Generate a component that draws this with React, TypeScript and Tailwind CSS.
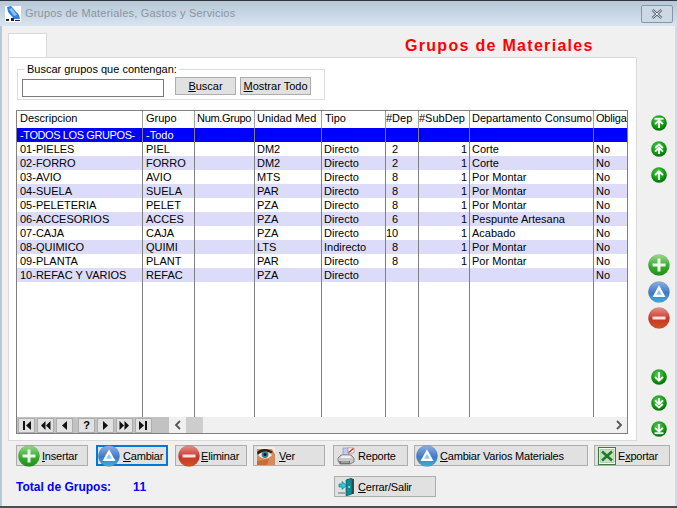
import type { ReactNode } from "react";

const rows = [
  ["01-PIELES", "PIEL", "", "DM2", "Directo", "2", "1", "Corte", "No"],
  ["02-FORRO", "FORRO", "", "DM2", "Directo", "2", "1", "Corte", "No"],
  ["03-AVIO", "AVIO", "", "MTS", "Directo", "8", "1", "Por Montar", "No"],
  ["04-SUELA", "SUELA", "", "PAR", "Directo", "8", "1", "Por Montar", "No"],
  ["05-PELETERIA", "PELET", "", "PZA", "Directo", "8", "1", "Por Montar", "No"],
  ["06-ACCESORIOS", "ACCES", "", "PZA", "Directo", "6", "1", "Pespunte Artesana", "No"],
  ["07-CAJA", "CAJA", "", "PZA", "Directo", "10", "1", "Acabado", "No"],
  ["08-QUIMICO", "QUIMI", "", "LTS", "Indirecto", "8", "1", "Por Montar", "No"],
  ["09-PLANTA", "PLANT", "", "PAR", "Directo", "8", "1", "Por Montar", "No"],
  ["10-REFAC Y VARIOS", "REFAC", "", "PZA", "Directo", "", "", "", "No"],
];

const header = ["Descripcion", "Grupo", "Num.Grupo", "Unidad Med", "Tipo", "#Dep", "#SubDep", "Departamento Consumo", "Obliga"];

function Cells({ values, firstTight = false }: { values: string[]; firstTight?: boolean }) {
  return (
    <>
      <div className={`w-[126px] border-r border-[#808080] pl-[3px] whitespace-nowrap overflow-hidden ${firstTight ? "tracking-[-0.4px]" : ""}`}>{values[0]}</div>
      <div className="w-[52px] border-r border-[#808080] pl-[3px] whitespace-nowrap overflow-hidden">{values[1]}</div>
      <div className="w-[60px] border-r border-[#808080] pl-[2px] whitespace-nowrap overflow-hidden">{values[2]}</div>
      <div className="w-[67px] border-r border-[#808080] pl-[2px] whitespace-nowrap overflow-hidden">{values[3]}</div>
      <div className="w-[64px] border-r border-[#808080] pl-[2px] whitespace-nowrap overflow-hidden">{values[4]}</div>
      <div className="w-[33px] border-r border-[#808080] text-right pr-[20px] whitespace-nowrap">{values[5]}</div>
      <div className="w-[51px] border-r border-[#808080] text-right pr-[2px] whitespace-nowrap">{values[6]}</div>
      <div className="w-[124px] border-r border-[#808080] pl-[2px] whitespace-nowrap overflow-hidden">{values[7]}</div>
      <div className="flex-1 pl-[2px] whitespace-nowrap overflow-hidden">{values[8]}</div>
    </>
  );
}

function HeaderCells() {
  return (
    <>
      <div className="w-[126px] border-r border-[#a0a0a0] pl-[3px] whitespace-nowrap">{header[0]}</div>
      <div className="w-[52px] border-r border-[#a0a0a0] pl-[3px] whitespace-nowrap">{header[1]}</div>
      <div className="w-[60px] border-r border-[#a0a0a0] pl-[2px] tracking-[-0.3px] whitespace-nowrap">{header[2]}</div>
      <div className="w-[67px] border-r border-[#a0a0a0] pl-[2px] whitespace-nowrap">{header[3]}</div>
      <div className="w-[64px] border-r border-[#a0a0a0] pl-[3px] whitespace-nowrap">{header[4]}</div>
      <div className="w-[33px] border-r border-[#a0a0a0] whitespace-nowrap">{header[5]}</div>
      <div className="w-[51px] border-r border-[#a0a0a0] whitespace-nowrap">{header[6]}</div>
      <div className="w-[124px] border-r border-[#a0a0a0] pl-[2px] whitespace-nowrap overflow-hidden">{header[7]}</div>
      <div className="flex-1 pl-[2px] tracking-[-0.2px] whitespace-nowrap">{header[8]}</div>
    </>
  );
}

// round green arrow icons on the right side
function ArrowIcon({ kind, down = false }: { kind: "end" | "page" | "one"; down?: boolean }) {
  return (
    <svg width="16" height="16" viewBox="0 0 16 16" className="block shrink-0">
      <defs>
        <radialGradient id="greenBall" cx="0.45" cy="0.35" r="0.7">
          <stop offset="0" stopColor="#5ed05e" />
          <stop offset="0.6" stopColor="#129a12" />
          <stop offset="1" stopColor="#046004" />
        </radialGradient>
      </defs>
      <circle cx="8" cy="8" r="7.8" fill="url(#greenBall)" />
      <g fill="none" stroke="#fff" strokeWidth="1.8" transform={down ? "rotate(180 8 8)" : undefined}>
        {kind === "end" && (
          <>
            <path d="M3.5 3.8H12.5" />
            <path d="M4 9.2L8 5.4L12 9.2" />
            <path d="M8 6V13" />
          </>
        )}
        {kind === "page" && (
          <>
            <path d="M4.2 7L8 3.4L11.8 7" />
            <path d="M4 10.6L8 6.8L12 10.6" />
            <path d="M8 7V13" />
          </>
        )}
        {kind === "one" && (
          <>
            <path d="M4 8.2L8 4.2L12 8.2" />
            <path d="M8 5V13" />
          </>
        )}
      </g>
    </svg>
  );
}

function BallIcon({ kind }: { kind: "plus" | "delta" | "minus" }) {
  const id = kind === "plus" ? "ballPlus" : kind === "delta" ? "ballDelta" : "ballMinus";
  const stops =
    kind === "plus"
      ? ["#9ad88e", "#35ad2c", "#1f8f1a"]
      : kind === "delta"
        ? ["#8fb0e4", "#3f78c8", "#3fb0d8"]
        : ["#e89088", "#c8352c", "#d0561c"];
  return (
    <svg width="22" height="22" viewBox="0 0 22 22" className="block shrink-0">
      <defs>
        <linearGradient id={id} x1="0" y1="0" x2="0" y2="1">
          <stop offset="0" stopColor={stops[0]} />
          <stop offset="0.55" stopColor={stops[1]} />
          <stop offset="1" stopColor={stops[2]} />
        </linearGradient>
      </defs>
      <circle cx="11" cy="11" r="10.6" fill={`url(#${id})`} stroke="#00000030" strokeWidth="0.6" />
      {kind === "plus" && <path d="M11 4.500V17.500M4.500 11H17.500" stroke="#eef8ea" strokeWidth="3" />}
      {kind === "minus" && <path d="M4.500 11H17.500" stroke="#f6e4e0" strokeWidth="3" />}
      {kind === "delta" && <path d="M11 6.500L15.600 14.800H6.400Z" fill="#8fc8f0" stroke="#fff" strokeWidth="2.2" />}
    </svg>
  );
}

function EyeIcon() {
  return (
    <svg width="18" height="18" viewBox="0 0 18 18" className="block shrink-0">
      <rect width="18" height="18" fill="#f6efe8" />
      <path d="M0 2H15L18 7V18H4L0 14Z" fill="#d98a58" />
      <path d="M0 5C4 1 11 1 16 5L14 6C10 4 5 4 1 8Z" fill="#2c2018" />
      <path d="M1 8C5 4 11 4 15 8C12 12 5 13 1 8Z" fill="#f2ece6" />
      <circle cx="8" cy="7.600" r="3.400" fill="#3a8098" />
      <circle cx="8" cy="7.600" r="1.500" fill="#101820" />
      <path d="M0 14L6 13L12 12L10 18H0Z" fill="#c86c3c" />
    </svg>
  );
}

function PrinterIcon() {
  return (
    <svg width="18" height="18" viewBox="0 0 18 18" className="block shrink-0">
      <path d="M6 1H12V8H6Z" fill="#c8c8f0" stroke="#8888c8" strokeWidth="0.6" />
      <path d="M11 1H17V6H11Z" fill="#fff" stroke="#808080" strokeWidth="0.6" />
      <path d="M11.500 5.500L16.500 1.500" stroke="#e02020" strokeWidth="1.400" />
      <path d="M4 8H14L17 11V15L13 17H3L1 14V11Z" fill="#c8c8c8" stroke="#606060" strokeWidth="0.7" />
      <path d="M5 8.500H13L14.500 11H3.500Z" fill="#f0f0f0" />
      <path d="M2 14H13V17H3Z" fill="#707070" />
      <path d="M4 15H12" stroke="#e8e8e8" strokeWidth="0.8" />
    </svg>
  );
}

function ExcelIcon() {
  return (
    <svg width="18" height="18" viewBox="0 0 18 18" className="block shrink-0">
      <rect x="0.5" y="0.5" width="17" height="17" fill="#f4f8f0" stroke="#3c7c3c" />
      <rect x="2" y="2.500" width="14" height="13" fill="#c8dfc0" stroke="#8cb48c" strokeWidth="0.5" />
      <path d="M4 4.500L14 13.500M14 4.500L4 13.500" stroke="#1f7a2c" strokeWidth="2.600" />
    </svg>
  );
}

function DoorIcon() {
  return (
    <svg width="17" height="18" viewBox="0 0 17 18" className="block shrink-0">
      <rect x="9" y="1" width="7" height="15" fill="#404848" />
      <path d="M8 2L14 0V16L8 18Z" fill="#0e8c94" stroke="#084c50" strokeWidth="0.6" />
      <rect x="10.500" y="8" width="1.200" height="2" fill="#d8f0f0" />
      <path d="M1 6H4V3.500L8.500 7.500L4 11.500V9H1Z" fill="#30c8d8" stroke="#186870" strokeWidth="0.6" />
      <rect x="0" y="14" width="8" height="2" fill="#a0a8a8" />
    </svg>
  );
}

function Btn({ w, focus = false, children }: { w: string; focus?: boolean; children: ReactNode }) {
  return (
    <div
      className={`${w} h-[21px] shrink-0 flex items-center bg-[#e1e1e1] ${focus ? "border-2 border-[#0078d7]" : "border border-[#adadad]"} leading-[14px] tracking-[-0.2px] whitespace-nowrap`}
    >
      {children}
    </div>
  );
}

function NavBtn({ children }: { children: ReactNode }) {
  return (
    <div className="w-[17px] h-[15px] shrink-0 flex items-center justify-center bg-[#e1e1e1] border border-[#adadad]">
      {children}
    </div>
  );
}

function NavGlyph({ d }: { d: string }) {
  return (
    <svg width="11" height="9" viewBox="0 0 11 9" className="block">
      <path d={d} fill="#111" />
    </svg>
  );
}

export default function App() {
  return (
    <div
      className="w-[677px] h-[508px] flex flex-col overflow-hidden bg-[#f0f0f0] text-[11px] text-black border-t border-[#30363c] border-b-2 border-b-[#46505a]"
      style={{ fontFamily: '"Liberation Sans", Arial, sans-serif' }}
    >
      {/* Title bar */}
      <div className="h-[25px] shrink-0 flex items-center bg-gradient-to-b from-[#b7c8d8] to-[#d8e4f0] pl-[5px] pr-[4px]">
        <svg width="16" height="16" viewBox="0 0 16 16" className="block shrink-0">
          <rect width="16" height="16" fill="#fff" />
          <path d="M2 1L6 0L14 9L15 13L9 13L3 6Z" fill="#2f7fe0" />
          <path d="M4 3L7 2L12 9L9 10Z" fill="#8cc0f4" />
          <path d="M1 13H4V15H1ZM6 12H9V15H6ZM10 14H15V15H10Z" fill="#1c2430" />
        </svg>
        <div className="ml-[4px] text-[#8a949e] tracking-[0.2px] whitespace-nowrap">Grupos de Materiales, Gastos y Servicios</div>
        <div className="ml-auto w-[32px] h-[18px] flex items-center justify-center rounded-[2px] border border-[#8496aa] bg-[#ccd8e4]">
          <svg width="12" height="10" viewBox="0 0 12 10" className="block">
            <path d="M1.500 1L10.500 9M10.500 1L1.500 9" stroke="#5a6470" strokeWidth="2.600" />
            <path d="M1.500 1L10.500 9M10.500 1L1.500 9" stroke="#f0f4f8" strokeWidth="1" />
          </svg>
        </div>
      </div>

      {/* Body */}
      <div className="flex-1 flex flex-col border-l-2 border-[#b8c8d8] border-r-2 border-r-[#d0dcea] pl-[6px]">
        <div className="flex">
          <div className="w-[629px] shrink-0">
            <div className="h-[31px] flex items-end">
              <div className="w-[39px] h-[24px] bg-white border border-b-0 border-[#d9d9d9]" />
              <div className="ml-[358px] mb-[2px] text-[#ff0000] font-bold text-[16px] leading-[18px] tracking-[1.3px] whitespace-nowrap">Grupos de Materiales</div>
            </div>

            {/* Page */}
            <div className="h-[384px] bg-white border border-[#d9d9d9] pt-[11px] pl-[7px]">
              <div className="relative ml-[1px] w-[308px] h-[31px] border border-[#dcdcdc] pt-[7px] pl-[4px] flex">
                <div className="absolute left-[7px] top-[-8px] bg-white px-[2px] leading-[14px] whitespace-nowrap">Buscar grupos que contengan:</div>
                <div className="w-[142px] h-[18px] mt-[2px] bg-white border border-[#7a7a7a]" />
                <div className="w-[61px] h-[18px] ml-[11px] flex items-center justify-center bg-[#e1e1e1] border border-[#adadad] leading-[14px]">
                  <span><span className="underline">B</span>uscar</span>
                </div>
                <div className="w-[71px] h-[18px] ml-[4px] flex items-center justify-center bg-[#e1e1e1] border border-[#adadad] leading-[14px] whitespace-nowrap">
                  <span><span className="underline">M</span>ostrar Todo</span>
                </div>
              </div>

              {/* Grid */}
              <div className="mt-[10px] w-[612px] h-[324px] border border-[#808080] flex flex-col bg-white">
                <div className="h-[17px] shrink-0 flex leading-[15px]">
                  <HeaderCells />
                </div>
                <div className="h-[14px] shrink-0 flex leading-[14px] bg-[#0000ff] text-white">
                  <Cells firstTight values={["-TODOS LOS GRUPOS-", "-Todo", "", "", "", "", "", "", ""]} />
                </div>
                {rows.map((r, i) => (
                  <div key={r[0]} className={`h-[14px] shrink-0 flex leading-[14px] ${i % 2 === 1 ? "bg-[#dcdcfa]" : "bg-white"}`}>
                    <Cells values={r} />
                  </div>
                ))}
                <div className="flex-1 flex">
                  <Cells values={["", "", "", "", "", "", "", "", ""]} />
                </div>

                {/* Navigator and scroll bar */}
                <div className="h-[16px] shrink-0 flex bg-[#f0f0f0]">
                  <div className="w-[152px] shrink-0 flex gap-[2px] items-center bg-[#c2c2c2] pl-[1px]">
                    <NavBtn><NavGlyph d="M2 0H4V9H2ZM10 0V9L5 4.500Z" /></NavBtn>
                    <NavBtn><NavGlyph d="M5.500 0V9L1 4.500ZM10.500 0V9L6 4.500Z" /></NavBtn>
                    <NavBtn><NavGlyph d="M8 0V9L3 4.500Z" /></NavBtn>
                    <div className="w-[1px]" />
                    <NavBtn><span className="font-bold leading-[12px] text-[11px]">?</span></NavBtn>
                    <NavBtn><NavGlyph d="M3 0V9L8 4.500Z" /></NavBtn>
                    <NavBtn><NavGlyph d="M0.500 0V9L5 4.500ZM5.500 0V9L10 4.500Z" /></NavBtn>
                    <NavBtn><NavGlyph d="M1 0V9L6 4.500ZM7 0H9V9H7Z" /></NavBtn>
                  </div>
                  <div className="w-[17px] flex items-center justify-center">
                    <svg width="8" height="10" viewBox="0 0 8 10" className="block">
                      <path d="M6 1L2 5L6 9" fill="none" stroke="#555" strokeWidth="1.800" />
                    </svg>
                  </div>
                  <div className="w-[17px] bg-[#cdcdcd]" />
                  <div className="flex-1" />
                  <div className="w-[17px] flex items-center justify-center">
                    <svg width="8" height="10" viewBox="0 0 8 10" className="block">
                      <path d="M2 1L6 5L2 9" fill="none" stroke="#555" strokeWidth="1.800" />
                    </svg>
                  </div>
                </div>
              </div>
            </div>
          </div>

          {/* Side buttons */}
          <div className="w-[36px] ml-[4px] shrink-0 flex flex-col items-center pt-[89px]">
            <ArrowIcon kind="end" />
            <div className="h-[10px]" />
            <ArrowIcon kind="page" />
            <div className="h-[10px]" />
            <ArrowIcon kind="one" />
            <div className="h-[71px]" />
            <BallIcon kind="plus" />
            <div className="h-[5px]" />
            <BallIcon kind="delta" />
            <div className="h-[4px]" />
            <BallIcon kind="minus" />
            <div className="h-[40px]" />
            <ArrowIcon kind="one" down />
            <div className="h-[10px]" />
            <ArrowIcon kind="page" down />
            <div className="h-[10px]" />
            <ArrowIcon kind="end" down />
          </div>
        </div>

        {/* Bottom buttons */}
        <div className="flex mt-[4px] ml-[8px]">
          <Btn w="w-[72px]">
            <div className="-my-1 ml-[1px]"><BallIcon kind="plus" /></div>
            <span className="ml-[2px]"><span className="underline">I</span>nsertar</span>
          </Btn>
          <div className="w-[8px] shrink-0" />
          <Btn w="w-[72px]" focus>
            <div className="-my-1"><BallIcon kind="delta" /></div>
            <span className="ml-[3px]"><span className="underline">C</span>ambiar</span>
          </Btn>
          <div className="w-[7px] shrink-0" />
          <Btn w="w-[72px]">
            <div className="-my-1 ml-[2px]"><BallIcon kind="minus" /></div>
            <span className="ml-[1px]"><span className="underline">E</span>liminar</span>
          </Btn>
          <div className="w-[6px] shrink-0" />
          <Btn w="w-[72px]">
            <div className="ml-[3px]"><EyeIcon /></div>
            <span className="ml-[4px]"><span className="underline">V</span>er</span>
          </Btn>
          <div className="w-[8px] shrink-0" />
          <Btn w="w-[75px]">
            <div className="ml-[3px]"><PrinterIcon /></div>
            <span className="ml-[3px]">Reporte</span>
          </Btn>
          <div className="w-[6px] shrink-0" />
          <Btn w="w-[174px]">
            <div className="-my-1 ml-[1px]"><BallIcon kind="delta" /></div>
            <span className="ml-[2px]"><span className="underline">C</span>ambiar Varios Materiales</span>
          </Btn>
          <div className="w-[6px] shrink-0" />
          <Btn w="w-[76px]">
            <div className="ml-[3px]"><ExcelIcon /></div>
            <span className="ml-[2px]">E<span className="underline">x</span>portar</span>
          </Btn>
        </div>

        <div className="flex items-center mt-[10px] ml-[8px]">
          <div className="w-[117px] pt-[1px] text-[12px] text-[#0000ff] font-bold whitespace-nowrap">Total de Grupos:</div>
          <div className="w-[201px] pt-[1px] text-[12px] text-[#0000ff] font-bold tracking-[0.5px]">11</div>
          <Btn w="w-[102px]">
            <div className="ml-[3px]"><DoorIcon /></div>
            <span className="ml-[3px]"><span className="underline">C</span>errar/Salir</span>
          </Btn>
        </div>
      </div>
    </div>
  );
}
